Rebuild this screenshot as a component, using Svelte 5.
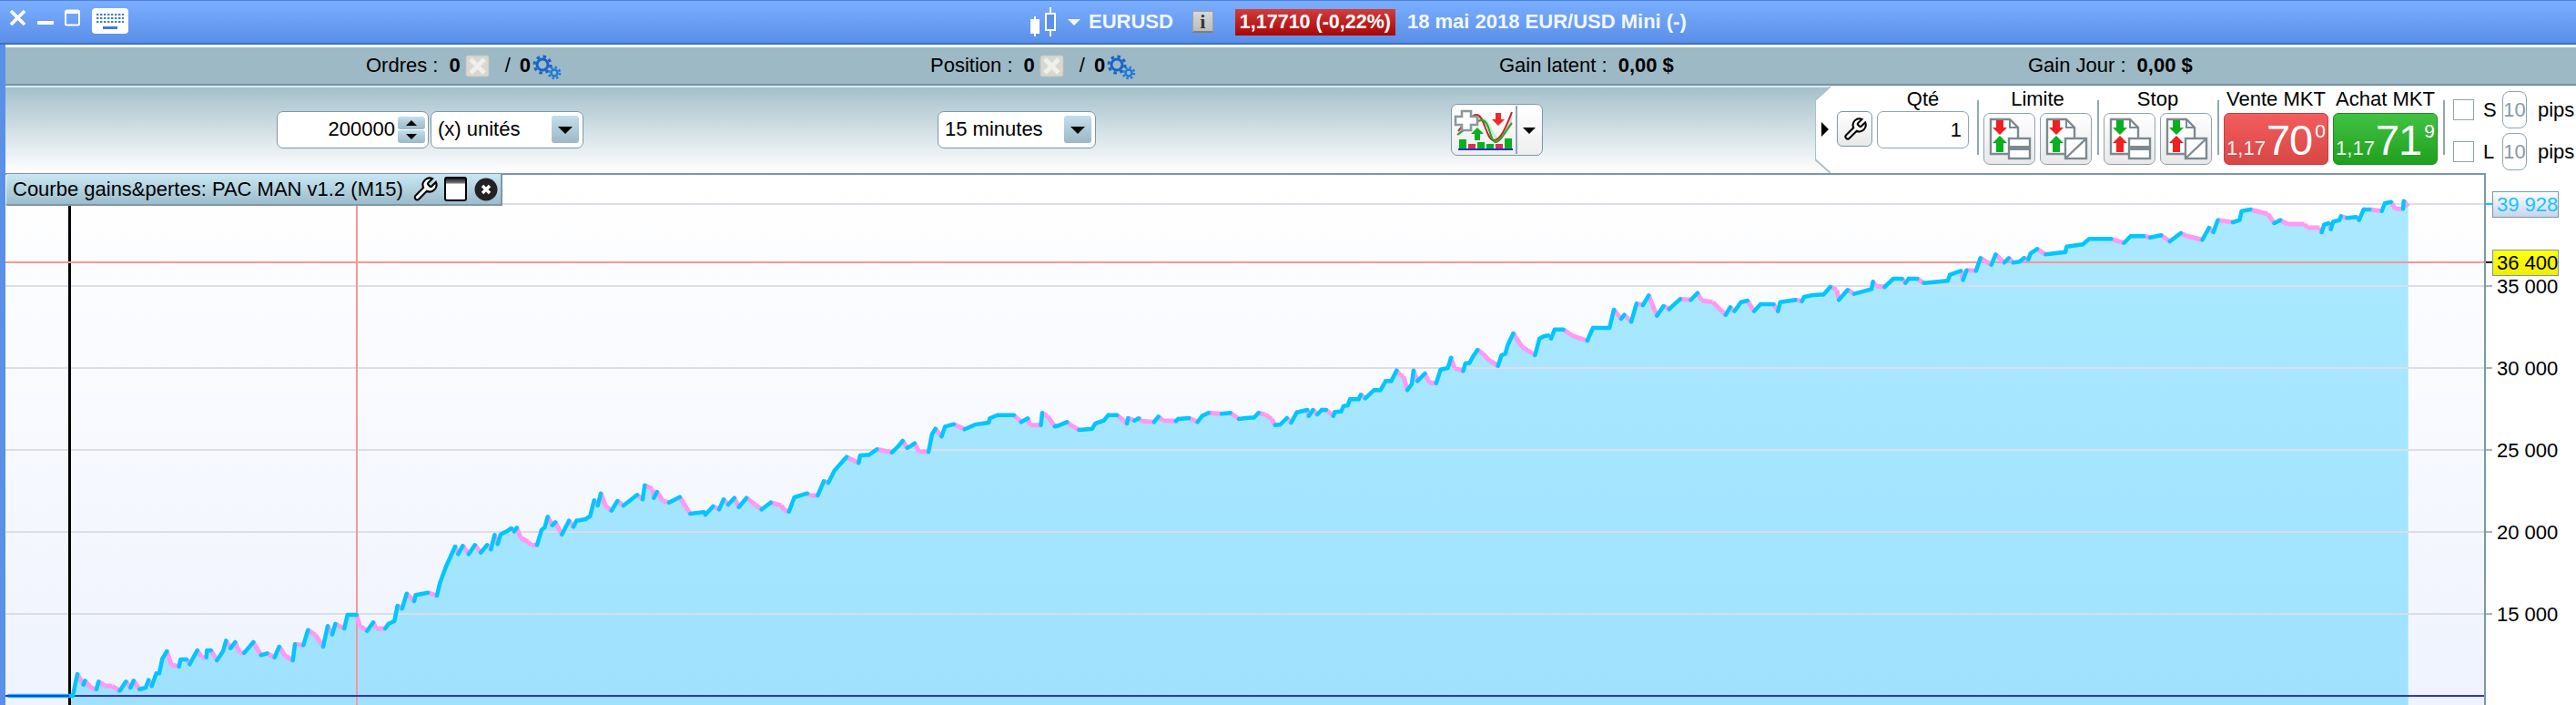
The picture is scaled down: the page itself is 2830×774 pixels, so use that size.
<script>
  // Chart scale: 5000 units = 90px, 35 000 sits on y=314
  const yOf = (v) => 314 + ((35000 - v) * 90) / 5000;
  const ticks = [35000, 30000, 25000, 20000, 15000];
  const fmt = (v) => String(v).replace(/\B(?=(\d{3})+$)/g, " ");

  const PLOT_RIGHT = 2729;
  const BASE_Y = 764;

  // Curve traced in stretches: [originX, originY, scaleX, points...]
  const stretches = [
    [0, 640, 3, [[30, 372], [240, 372], [255, 300], [275, 335], [280, 322], [300, 345], [318, 350], [325, 325], [345, 338], [370, 340], [395, 355], [415, 325], [430, 345], [440, 322], [460, 350], [480, 345], [490, 320], [500, 340], [515, 298], [525, 298], [535, 250], [550, 225], [565, 270], [590, 275], [595, 252], [615, 252], [625, 268], [650, 222], [665, 245], [680, 245], [682, 222], [695, 222], [715, 255], [735, 225], [745, 190], [760, 215], [775, 195], [790, 230], [805, 230], [835, 195], [860, 238], [880, 232], [905, 245], [920, 210], [940, 240], [965, 255], [972, 202], [1000, 205], [1015, 155], [1040, 172], [1065, 210], [1080, 142], [1095, 170], [1105, 135], [1135, 150], [1145, 105], [1175, 105], [1185, 140], [1210, 158], [1230, 130], [1240, 150], [1270, 150], [1280, 135], [1300, 125], [1310, 75], [1325, 85], [1340, 35], [1365, 60], [1370, 40], [1410, 32], [1440, 42], [1450, 0], [1470, -54]]],
    [500, 400, 3, [[0, 600], [10, 625], [25, 598], [45, 625], [65, 595], [85, 620], [105, 595], [118, 610], [130, 562], [140, 592], [150, 560], [170, 550], [185, 540], [195, 550], [203, 538], [215, 570], [240, 585], [250, 595], [270, 595], [285, 545], [295, 538], [305, 502], [320, 530], [330, 520], [352, 560], [375, 515], [390, 535], [400, 515], [430, 510], [445, 500], [458, 448], [470, 465], [480, 425], [495, 465], [515, 482], [535, 450], [555, 465], [600, 430], [618, 445], [625, 398], [650, 410], [655, 440], [665, 420], [685, 450], [705, 455], [740, 437], [775, 492], [820, 487], [825, 495], [850, 468], [870, 478], [885, 445], [900, 462], [920, 440], [935, 470], [960, 440], [1010, 478], [1040, 455], [1075, 465], [1085, 480], [1100, 485], [1118, 438], [1160, 425], [1170, 432], [1195, 432], [1215, 385], [1230, 390], [1250, 350], [1290, 305], [1330, 325], [1335, 300], [1365, 298], [1390, 280], [1440, 290], [1460, 270], [1475, 252], [1490, 275]]],
    [1000, 260, 2.0907, [[0, 690], [10, 680], [20, 708], [42, 708], [50, 650], [58, 632], [72, 658], [80, 625], [100, 617], [125, 634], [150, 618], [180, 612], [183, 598], [200, 587], [238, 587], [255, 610], [270, 598], [275, 620], [300, 620], [303, 580], [315, 590], [332, 625], [340, 622], [360, 610], [370, 622], [388, 636], [418, 632], [425, 615], [445, 605], [455, 587], [475, 587], [498, 615], [500, 597], [515, 605], [525, 598], [530, 607], [560, 610], [570, 592], [580, 605], [610, 607], [615, 600], [640, 597], [660, 610], [670, 590], [685, 580], [715, 583], [735, 580], [755, 600], [770, 597], [790, 595], [800, 580], [815, 585], [830, 600], [838, 620], [850, 618], [865, 597], [875, 612], [888, 578], [912, 570], [915, 590], [925, 570], [935, 585], [945, 570], [955, 570], [972, 590], [975, 577], [990, 575], [995, 558], [1005, 555], [1010, 535], [1030, 535], [1035, 520], [1045, 532], [1065, 505], [1080, 505], [1092, 475], [1105, 475], [1117, 440], [1125, 455], [1133, 460], [1142, 505], [1152, 485], [1156, 440], [1165, 475], [1182, 450], [1192, 480], [1208, 482], [1218, 437], [1235, 432], [1242, 398], [1250, 432], [1270, 442], [1275, 417], [1285, 415], [1292, 395], [1303, 372], [1315, 385], [1330, 407], [1350, 425], [1358, 390], [1367, 385], [1372, 358], [1385, 318], [1405, 362], [1435, 390], [1445, 335], [1455, 328], [1465, 325], [1472, 335], [1480, 305], [1500, 305], [1520, 325], [1555, 342]]],
    [1750, 200, 2.0907, [[0, 480], [38, 480], [48, 420], [65, 450], [72, 437], [88, 460], [100, 400], [115, 405], [128, 373], [147, 440], [162, 408], [175, 418], [200, 385], [225, 388], [240, 365], [250, 390], [275, 395], [305, 437], [315, 412], [325, 425], [340, 395], [355, 390], [370, 425], [385, 402], [415, 402], [425, 425], [430, 395], [465, 388], [480, 392], [485, 378], [505, 372], [530, 370], [545, 345], [560, 355], [565, 388], [585, 355], [600, 368], [640, 352], [643, 328], [650, 342], [670, 345], [690, 318], [710, 318], [718, 332], [725, 318], [745, 318], [760, 332], [815, 325], [820, 305], [845, 292], [850, 322], [858, 290], [880, 292], [890, 250], [915, 272], [925, 238], [945, 265], [955, 250], [965, 265], [980, 262], [990, 250], [1000, 255], [1005, 235], [1020, 220], [1040, 238], [1085, 230], [1088, 212], [1125, 205], [1140, 187], [1190, 187], [1220, 200], [1235, 178], [1265, 178], [1280, 182], [1305, 175], [1325, 195], [1350, 168], [1365, 178], [1400, 190], [1415, 150], [1425, 165], [1435, 125], [1470, 132], [1485, 125], [1490, 95], [1510, 90], [1550, 105], [1565, 135]]],
    [2400, 180, 3, [[315, 185], [340, 198], [395, 198], [405, 210], [445, 210], [452, 225], [460, 200], [475, 195], [482, 215], [490, 190], [510, 185], [515, 172], [535, 178], [565, 175], [575, 185], [590, 150], [610, 150], [650, 155], [660, 130], [680, 125], [695, 148], [720, 148], [722, 122], [737, 140]]],
  ];

  const curve = stretches.flatMap(([ox, oy, sx, pts]) =>
    pts.map(([x, y]) => [ox + x / sx, oy + y / 3]),
  );

  // Rising runs are cyan, falling runs pink; a flat run keeps the last colour
  let rising = true;
  let upPath = "";
  let downPath = "";
  for (let i = 1; i < curve.length; i++) {
    const [x0, y0] = curve[i - 1];
    const [x1, y1] = curve[i];
    if (y1 !== y0) rising = y1 < y0;
    const seg = `M${x0.toFixed(1)} ${y0.toFixed(1)}L${x1.toFixed(1)} ${y1.toFixed(1)}`;
    if (rising) upPath += seg;
    else downPath += seg;
  }

  const fillStart = 76;
  const fillPoints = curve.filter(([x]) => x >= fillStart);
  const fillEnd = fillPoints[fillPoints.length - 1][0];
  const fillPath =
    `M${fillStart} 774L` +
    fillPoints.map(([x, y]) => `${x.toFixed(1)} ${y.toFixed(1)}`).join("L") +
    `L${fillEnd.toFixed(1)} 774Z`;

  const wrench =
    "M14.7 6.3a1 1 0 0 0 0 1.4l1.6 1.6a1 1 0 0 0 1.4 0l3.77-3.77a6 6 0 0 1-7.94 7.94l-6.91 6.91a2.12 2.12 0 0 1-3-3l6.91-6.91a6 6 0 0 1 7.94-7.94l-3.76 3.76z";
</script>

{#snippet docX()}
  <svg class="doc-x" width="27" height="25" viewBox="0 0 27 25">
    <rect x="1" y="1" width="25" height="23" rx="2" fill="#d8d8d0" stroke="#c2c2ba" />
    <path d="M6 5l15 15M21 5L6 20" stroke="#f0f0ea" stroke-width="5" />
  </svg>
{/snippet}

{#snippet gears()}
  <svg class="gears" width="32" height="28" viewBox="0 0 32 28">
    <circle cx="11" cy="11" r="6" fill="none" stroke="#1a62c8" stroke-width="3" />
    <circle cx="11" cy="11" r="9" fill="none" stroke="#1a62c8" stroke-width="3" stroke-dasharray="3.5 3.6" />
    <circle cx="24" cy="20" r="3.5" fill="none" stroke="#1e78d8" stroke-width="2.5" />
    <circle cx="24" cy="20" r="6" fill="none" stroke="#1e78d8" stroke-width="2.5" stroke-dasharray="2.4 2.3" />
  </svg>
{/snippet}

{#snippet stat(label, value, icons)}
  <div class="stat">
    <span>{label} :</span>
    <b>{value}</b>
    {#if icons}
      {@render docX()}
      <span class="slash">/</span>
      <b>0</b>
      {@render gears()}
    {/if}
  </div>
{/snippet}

{#snippet orderBtn(top, bottom, kind)}
  <button class="order-btn" aria-label="ordre">
    <svg width="55" height="55" viewBox="0 0 55 55">
      <path d="M7 6h21l9 9v29H7z" fill="#fff" stroke="#7c8a90" stroke-width="2.4" />
      <path d="M28 6v9h9" fill="none" stroke="#7c8a90" stroke-width="2" />
      <path d="M13 7h8v8h4l-8 8-8-8h4z" fill={top} />
      <path d="M17 24l8 8h-4v10h-8V32H9z" fill={bottom} />
      <rect x="27" y="27" width="23" height="22" fill="#fff" stroke="#7c8a90" stroke-width="2.4" />
      {#if kind === "band"}
        <rect x="27" y="35" width="23" height="5" fill="#7c8a90" />
      {:else}
        <path d="M28 48l21-20" stroke="#7c8a90" stroke-width="2.4" />
      {/if}
    </svg>
  </button>
{/snippet}

{#snippet priceBtn(label, color, big, small)}
  <div class="group">
    <div class="group-label price-label">{label}</div>
    <button class="price {color}">
      <span class="pre">1,17</span><span class="big">{big}</span><span class="sup">{small}</span>
    </button>
  </div>
{/snippet}

{#snippet pipsRow(letter)}
  <div class="pips-row">
    <span class="check"></span>
    <span class="letter">{letter}</span>
    <span class="pips-field">10</span>
    <span class="pips-unit">pips</span>
  </div>
{/snippet}

<div class="window">
  <header class="titlebar">
    <div class="winbtns">
      <svg width="132" height="32" viewBox="0 0 132 32">
        <path d="M3 3l15 15M18 3L3 18" stroke="#fff" stroke-width="3.8" />
        <rect x="32" y="14" width="18" height="4" rx="1" fill="#fff" />
        <rect x="63" y="2.5" width="15" height="16" rx="1.5" fill="none" stroke="#fff" stroke-width="2" />
        <rect x="63" y="2" width="15" height="4" fill="#fff" />
        <rect x="92" y="0" width="40" height="28" rx="4" fill="#fff" />
        <path d="M97 7h30M97 11h30M97 15h30" stroke="#3f78d8" stroke-width="2" stroke-dasharray="2.4 1.6" />
        <rect x="104" y="20" width="16" height="3" fill="#3f78d8" />
      </svg>
    </div>
    <div class="instrument">
      <svg width="36" height="32" viewBox="0 0 36 32">
        <path d="M7 10v23M24 0v32" stroke="#fff" stroke-width="2" />
        <rect x="2" y="13" width="10" height="16" fill="#fff" />
        <rect x="19" y="7" width="10" height="18" fill="#5a90e8" stroke="#fff" stroke-width="2" />
      </svg>
      <span class="caret"></span>
      <b class="symbol">EURUSD</b>
      <span class="info">i</span>
      <span class="quote">1,17710 (-0,22%)</span>
      <b class="desc">18 mai 2018 EUR/USD Mini (-)</b>
    </div>
  </header>

  <div class="body">
    <div class="stats">
      {@render stat("Ordres", "0", true)}
      {@render stat("Position", "0", true)}
      {@render stat("Gain latent", "0,00 $", false)}
      {@render stat("Gain Jour", "0,00 $", false)}
    </div>

    <div class="toolbar">
      <div class="field spinner">
        <span class="num">200000</span>
        <span class="spin">
          <span class="spin-up"></span>
          <span class="spin-down"></span>
        </span>
      </div>
      <div class="field select units">
        <span>(x) unités</span>
        <span class="drop"></span>
      </div>
      <div class="field select period">
        <span>15 minutes</span>
        <span class="drop"></span>
      </div>

      <button class="indicator" aria-label="indicateurs">
        <svg width="96" height="55" viewBox="0 0 96 55">
          <path d="M7 29C14 20 22 10 28 11c8 2 10 28 18 28 8 0 14-16 20-31v14C60 32 52 42 46 41 40 39 36 18 32 17 22 16 14 26 7 34z" fill="#f6cfcb" />
          <path d="M26 23c4-4 8-6 10-5 5 2 7 18 13 21l4-1C46 34 40 14 34 14c-3 0-6 5-8 9z" fill="#c8eec8" />
          <path d="M7 29C14 20 22 10 28 11c8 2 10 28 18 28 8 0 14-16 20-31" fill="none" stroke="#c02a2a" stroke-width="2" />
          <path d="M6 33C16 26 26 16 34 17c8 2 8 24 14 24 6 0 12-14 18-21" fill="none" stroke="#1fa82a" stroke-width="2" />
          <path d="M11 7h10v6h7v9h-7v6H11v-6H4v-9h7z" fill="#fff" stroke="#8a98a0" stroke-width="2.6" />
          <path d="M48 9h6v7h4l-7 7-7-7h4z" fill="#ee2b2b" />
          <path d="M28 25l7 7h-4v7h-6v-7h-4z" fill="#08b020" />
          <rect x="8" y="38" width="8" height="10" fill="#08b020" />
          <rect x="18" y="43" width="8" height="5" fill="#d83050" />
          <rect x="28" y="41" width="8" height="7" fill="#08b020" />
          <rect x="38" y="43" width="8" height="5" fill="#08b020" />
          <rect x="48" y="43" width="8" height="5" fill="#d83050" />
          <rect x="58" y="37" width="8" height="11" fill="#08b020" />
          <rect x="7" y="48" width="60" height="2" fill="#2030d0" />
          <rect x="70" y="1" width="2" height="53" fill="#8fa8b4" />
          <path d="M78 25h14l-7 7z" fill="#000" />
        </svg>
      </button>

      <div class="panel">
        <svg class="notch" width="17" height="95" viewBox="0 0 17 95">
          <path d="M17 0L0 15v65l17 15z" fill="#fff" />
          <path d="M17 0L0 15v65l17 15" fill="none" stroke="#a9c1cc" stroke-width="2" />
          <path d="M7 39l8 8-8 8z" fill="#000" />
        </svg>

        <div class="group qty-group">
          <div class="group-label qty-label">Qté</div>
          <div class="qty-row">
            <button class="tool" aria-label="réglages">
              <svg width="28" height="28" viewBox="0 0 24 24">
                <path d={wrench} fill="#fff" stroke="#000" stroke-width="1.8" />
              </svg>
            </button>
            <div class="qty">1</div>
          </div>
        </div>

        <span class="sep"></span>
        <div class="group">
          <div class="group-label">Limite</div>
          <div class="btn-pair">
            {@render orderBtn("#f02020", "#08b020", "band")}
            {@render orderBtn("#f02020", "#08b020", "slash")}
          </div>
        </div>

        <span class="sep"></span>
        <div class="group">
          <div class="group-label">Stop</div>
          <div class="btn-pair">
            {@render orderBtn("#08b020", "#f02020", "band")}
            {@render orderBtn("#08b020", "#f02020", "slash")}
          </div>
        </div>

        <span class="sep"></span>
        <div class="prices">
          {@render priceBtn("Vente MKT", "sell", "70", "0")}
          {@render priceBtn("Achat MKT", "buy", "71", "9")}
        </div>

        <span class="sep"></span>
        <div class="pips">
          {@render pipsRow("S")}
          {@render pipsRow("L")}
        </div>
      </div>
    </div>

    <div class="chart">
      <svg class="plot" width="2824" height="584" viewBox="6 190 2824 584">
        <defs>
          <linearGradient id="plotBg" x1="0" y1="0" x2="0" y2="1">
            <stop offset="0" stop-color="#ffffff" />
            <stop offset="1" stop-color="#eff3fe" />
          </linearGradient>
          <linearGradient id="lastBg" x1="0" y1="0" x2="0" y2="1">
            <stop offset="0" stop-color="#ffffff" />
            <stop offset="1" stop-color="#c6d3ec" />
          </linearGradient>
          <linearGradient id="levelBg" x1="0" y1="0" x2="0" y2="1">
            <stop offset="0" stop-color="#ffff10" />
            <stop offset="1" stop-color="#eeee00" />
          </linearGradient>
        </defs>

        <rect x="6" y="190" width={PLOT_RIGHT - 6} height="584" fill="url(#plotBg)" />
        <path d={fillPath} fill="#00bfff" fill-opacity="0.33" />

        <line x1="6" x2={PLOT_RIGHT} y1="224" y2="224" class="grid" />
        {#each ticks as t}
          <line x1="6" x2={PLOT_RIGHT} y1={yOf(t)} y2={yOf(t)} class="grid" />
          <line x1={PLOT_RIGHT} x2="2738" y1={yOf(t)} y2={yOf(t)} class="tick" />
          <text x="2743" y={yOf(t) + 8} class="axis-label">{fmt(t)}</text>
        {/each}

        <line x1="76.5" x2="76.5" y1="190" y2="774" stroke="#000" stroke-width="3" />
        <line x1="392" x2="392" y1="190" y2="774" stroke="#fa9696" stroke-width="2" />
        <line x1="6" x2={PLOT_RIGHT} y1="288" y2="288" stroke="#fa9696" stroke-width="2" />
        <line x1="6" x2={PLOT_RIGHT + 2} y1={BASE_Y} y2={BASE_Y} stroke="#2a35d8" stroke-width="2" />

        <path d={downPath} fill="none" stroke="#ff99f5" stroke-width="5" />
        <path d={upPath} fill="none" stroke="#00c6ff" stroke-width="4.5" stroke-linecap="round" />
        <line x1="6" x2="76" y1={BASE_Y} y2={BASE_Y} stroke="#2a35d8" stroke-width="2" />

        <line x1="6" x2="2730" y1="191" y2="191" stroke="#7d98a5" stroke-width="2" />
        <line x1="2730" x2="2730" y1="190" y2="774" stroke="#7d98a5" stroke-width="2" />

        <line x1="2731" x2="2738" y1="224" y2="224" stroke="#14c4ff" stroke-width="2" />
        <rect x="2738.5" y="210.5" width="72" height="28" fill="url(#lastBg)" stroke="#7d98a5" />
        <text x="2743" y="232" class="axis-label last">39 928</text>

        <line x1="2731" x2="2738" y1="288" y2="288" stroke="#000" stroke-width="2" />
        <rect x="2738.5" y="274.5" width="72" height="28" fill="url(#levelBg)" stroke="#7d98a5" />
        <text x="2743" y="296" class="axis-label">36 400</text>
      </svg>

      <div class="legend">
        <span>Courbe gains&amp;pertes: PAC MAN v1.2 (M15)</span>
        <svg width="30" height="30" viewBox="0 0 24 24">
          <path d={wrench} fill="#fff" stroke="#000" stroke-width="1.7" />
        </svg>
        <span class="mini-window"></span>
        <svg width="26" height="26" viewBox="0 0 26 26">
          <circle cx="13" cy="13" r="12.5" fill="#222" />
          <path d="M9 9l8 8M17 9l-8 8" stroke="#fff" stroke-width="3.4" />
        </svg>
      </div>
    </div>
  </div>
</div>

<style>
  :global(body) {
    margin: 0;
    overflow: hidden;
    background: #fff;
  }

  .window {
    width: 2830px;
    height: 774px;
    font-family: "Liberation Sans", Arial, sans-serif;
    font-size: 22px;
    color: #000;
    display: flex;
    flex-direction: column;
  }

  .titlebar {
    height: 49px;
    box-sizing: border-box;
    display: flex;
    align-items: center;
    background: linear-gradient(#7aaeff, #5a8fe8);
    border-top: 1px solid #4d82de;
    border-bottom: 2px solid #3b70cc;
    color: #f2f7ff;
  }

  .winbtns {
    margin-left: 9px;
    height: 32px;
    margin-top: 2px;
  }

  .winbtns svg,
  .instrument svg {
    display: block;
  }

  .instrument {
    margin-left: 989px;
    display: flex;
    align-items: center;
  }

  .caret {
    margin-left: 7px;
    border-left: 7px solid transparent;
    border-right: 7px solid transparent;
    border-top: 7px solid #f2f7ff;
  }

  .symbol {
    margin-left: 9px;
  }

  .info {
    margin-left: 21px;
    width: 23px;
    height: 24px;
    box-sizing: border-box;
    line-height: 22px;
    text-align: center;
    font-family: "Liberation Serif", serif;
    font-weight: bold;
    color: #333;
    background: linear-gradient(#d8d8d8, #bcbcbc);
    border: 1px solid #a0a0a0;
    border-bottom: 2px solid #7f7f7f;
  }

  .quote {
    margin-left: 24px;
    height: 29px;
    width: 176px;
    box-sizing: border-box;
    line-height: 29px;
    text-align: center;
    font-weight: bold;
    font-size: 21.5px;
    color: #fff;
    background: linear-gradient(#d43c3c, #a80606);
  }

  .desc {
    margin-left: 13px;
    white-space: nowrap;
  }

  .body {
    flex: 1;
    min-height: 0;
    display: flex;
    flex-direction: column;
    border-left: 6px solid #5a90e8;
    background: #fff;
  }

  .stats {
    margin-top: 3px;
    height: 40px;
    flex: none;
    display: grid;
    grid-template-columns: 396px 620px 625px 581px 1fr;
    align-items: center;
    background: #9cb9c5;
  }

  .stat {
    display: flex;
    align-items: center;
    white-space: nowrap;
  }

  .stat:nth-child(1) {
    grid-column: 2;
  }

  .stat b {
    margin-left: 12px;
  }

  .doc-x {
    margin-left: 5px;
  }

  .slash {
    margin-left: 17px;
  }

  .slash + b {
    margin-left: 10px;
  }

  .gears {
    margin-left: 2px;
    margin-top: 3px;
  }

  .toolbar {
    height: 98px;
    box-sizing: border-box;
    flex: none;
    display: flex;
    align-items: center;
    padding-left: 298px;
    background: linear-gradient(#a3bfca, #fff);
    border-top: 2px solid #7a929e;
    box-shadow: inset 0 2px 0 #d6ecf4;
  }

  .field {
    height: 41px;
    box-sizing: border-box;
    background: #fff;
    border: 1px solid #7d98a5;
    border-radius: 7px;
    display: flex;
    align-items: center;
  }

  .spinner {
    width: 167px;
    justify-content: flex-end;
    padding-right: 3px;
  }

  .num {
    margin-right: 3px;
  }

  .spin {
    width: 30px;
    display: flex;
    flex-direction: column;
    gap: 1px;
  }

  .spin-up,
  .spin-down {
    height: 14px;
    position: relative;
    background: linear-gradient(#c3dfeb, #9cb8c4);
    border-radius: 3px;
  }

  .spin-up::after,
  .spin-down::after {
    content: "";
    position: absolute;
    left: 9px;
    top: 4px;
    border-left: 6px solid transparent;
    border-right: 6px solid transparent;
  }

  .spin-up::after {
    border-bottom: 6px solid #000;
  }

  .spin-down::after {
    border-top: 6px solid #000;
  }

  .select {
    justify-content: space-between;
    padding: 0 4px 0 7px;
  }

  .units {
    width: 168px;
    margin-left: 2px;
  }

  .period {
    width: 174px;
    margin-left: 389px;
  }

  .drop {
    width: 30px;
    height: 30px;
    position: relative;
    background: linear-gradient(#c3dfeb, #9cb8c4);
    border-radius: 3px;
  }

  .drop::after {
    content: "";
    position: absolute;
    left: 7px;
    top: 12px;
    border-left: 8px solid transparent;
    border-right: 8px solid transparent;
    border-top: 8px solid #000;
  }

  .indicator {
    margin-left: 390px;
    width: 101px;
    height: 57px;
    padding: 0;
    background: linear-gradient(#fff, #eee);
    border: 1px solid #7d98a5;
    border-radius: 7px;
  }

  .indicator svg {
    display: block;
  }

  .panel {
    margin-left: auto;
    margin-top: 1px;
    align-self: stretch;
    width: 836px;
    display: flex;
    background: linear-gradient(to right, transparent 17px, #fff 17px);
  }

  .notch {
    flex: none;
    display: block;
  }

  .group {
    display: flex;
    flex-direction: column;
  }

  .group-label {
    height: 27px;
    margin-bottom: 2px;
    line-height: 27px;
    text-align: center;
    white-space: nowrap;
  }

  .qty-group {
    margin-left: 7px;
    margin-right: 3px;
  }

  .qty-label {
    margin-bottom: 0;
    padding-left: 44px;
  }

  .qty-row {
    display: flex;
    gap: 5px;
  }

  .tool {
    width: 39px;
    height: 39px;
    padding: 0;
    display: flex;
    align-items: center;
    justify-content: center;
    background: linear-gradient(#fff, #e8e8e8);
    border: 1px solid #7d98a5;
    border-radius: 6px;
  }

  .qty {
    width: 101px;
    height: 41px;
    box-sizing: border-box;
    line-height: 39px;
    text-align: right;
    padding-right: 7px;
    border: 1px solid #8ea3ae;
    border-radius: 7px;
  }

  .sep {
    flex: none;
    width: 2px;
    height: 60px;
    margin: 15px 5px 0 6px;
    background: #8fa8b4;
  }

  .btn-pair {
    display: flex;
    gap: 5px;
  }

  .order-btn {
    width: 57px;
    height: 57px;
    padding: 0;
    background: linear-gradient(#fff, #e8e8e8);
    border: 1px solid #8ea3ae;
    border-radius: 7px;
  }

  .order-btn svg {
    display: block;
  }

  .prices {
    display: flex;
    gap: 5px;
  }

  .price-label {
    margin-left: -3px;
    margin-right: -3px;
  }

  .price {
    width: 115px;
    height: 57px;
    padding: 0;
    display: flex;
    align-items: baseline;
    justify-content: center;
    color: #fff;
    font-family: inherit;
    border-radius: 6px;
    line-height: 57px;
  }

  .sell {
    background: linear-gradient(#f25e5e, #d94646);
    border: 1px solid #d03a3a;
  }

  .buy {
    background: linear-gradient(#42c242, #1fa01f);
    border: 1px solid #189018;
  }

  .pre {
    font-size: 22px;
    opacity: 0.92;
  }

  .big {
    font-size: 47px;
    letter-spacing: -1px;
    margin: 0 3px 0 1px;
  }

  .sup {
    font-size: 21px;
    position: relative;
    top: -19px;
  }

  .pips {
    display: flex;
    flex-direction: column;
    gap: 5px;
    padding-top: 5px;
  }

  .pips-row {
    height: 41px;
    display: flex;
    align-items: center;
  }

  .check {
    width: 23px;
    height: 23px;
    box-sizing: border-box;
    border: 1px solid #8ea3ae;
    background: #fff;
    margin-left: 4px;
  }

  .letter {
    width: 21px;
    margin-left: 10px;
  }

  .pips-field {
    width: 27px;
    height: 41px;
    box-sizing: border-box;
    line-height: 39px;
    text-align: center;
    color: #8a9aa3;
    border: 1px solid #8ea3ae;
    border-radius: 8px;
  }

  .pips-unit {
    margin-left: 12px;
  }

  .chart {
    position: relative;
    flex: 1;
    min-height: 0;
  }

  .plot {
    display: block;
  }

  .grid {
    stroke: #dcdde8;
    stroke-width: 2;
  }

  .tick {
    stroke: #a8b6be;
    stroke-width: 2;
  }

  .axis-label {
    font-size: 22px;
    fill: #000;
  }

  .last {
    fill: #14c4ff;
  }

  .legend {
    position: absolute;
    left: 1px;
    top: 1px;
    width: 545px;
    height: 35px;
    box-sizing: border-box;
    display: flex;
    align-items: center;
    gap: 4px;
    padding-left: 7px;
    background: linear-gradient(#c9e8f4, #9dbccb);
    border-right: 2px solid #7d98a5;
    border-bottom: 2px solid #7d98a5;
    white-space: nowrap;
  }

  .legend span:first-child {
    margin-right: 5px;
  }

  .mini-window {
    width: 25px;
    height: 27px;
    box-sizing: border-box;
    border: 2px solid #000;
    border-radius: 3px;
    background: linear-gradient(#222 0, #777 5px, #fff 6px);
    margin: 0 4px 0 2px;
  }
</style>
